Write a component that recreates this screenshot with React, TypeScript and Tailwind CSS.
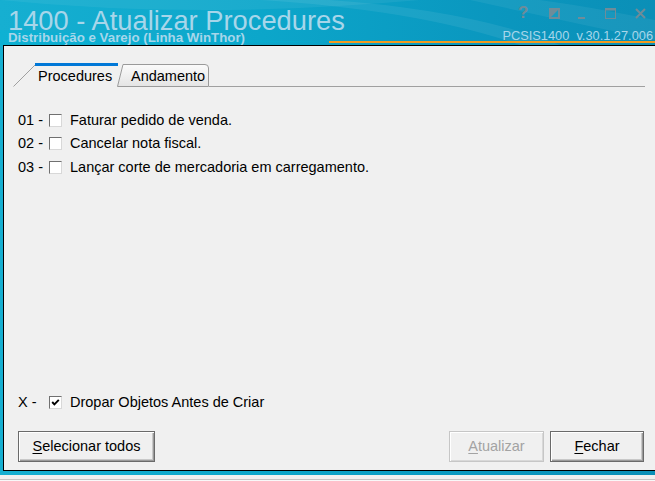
import React from "react";

function Checkbox({ checked = false }: { checked?: boolean }) {
  return (
    <div className="w-[13px] h-[13px] shrink-0 bg-white border-t border-l border-t-[#707070] border-l-[#707070] border-r border-b border-r-[#d8d8d8] border-b-[#d8d8d8] relative">
      {checked && (
        <svg width="11" height="11" viewBox="0 0 11 11" className="absolute left-0 top-0">
          <path d="M2.2 5 L4.4 7.4 L8.8 2.8" fill="none" stroke="#000" strokeWidth="1.9" />
        </svg>
      )}
    </div>
  );
}

function Row({
  num,
  label,
  className = "",
  checked = false,
}: {
  num: string;
  label: string;
  className?: string;
  checked?: boolean;
}) {
  return (
    <div className={"flex items-start " + className}>
      <div className="w-[31px] text-[14.5px] leading-[13px] text-black whitespace-nowrap">{num}</div>
      <Checkbox checked={checked} />
      <div className="ml-[8px] text-[14.5px] leading-[13px] text-black whitespace-nowrap">{label}</div>
    </div>
  );
}

function Button({
  children,
  className = "",
  disabled = false,
}: {
  children: React.ReactNode;
  className?: string;
  disabled?: boolean;
}) {
  return (
    <div
      className={
        "h-[31px] flex items-center justify-center text-[14.5px] leading-none bg-[#f0f0f0] border " +
        (disabled
          ? "border-[#c6c6c6] text-[#a3a3a3] shadow-[inset_1px_1px_0_#ffffff,inset_-1px_-1px_0_#d8d8d8] "
          : "border-[#6a6a6a] text-black shadow-[inset_1px_1px_0_#ffffff,inset_-1px_-1px_0_#9a9a9a,inset_-2px_-2px_0_#c8c8c8] ") +
        className
      }
    >
      {children}
    </div>
  );
}

export default function App() {
  return (
    <div
      className="w-[655px] h-[481px] overflow-hidden flex flex-col bg-[#f0f0f0]"
      style={{ fontFamily: '"Liberation Sans", Arial, sans-serif' }}
    >
      <div className="h-[475px] flex flex-col bg-[linear-gradient(90deg,#16afd1_0%,#0ca6ca_40%,#0a97bf_75%,#0b8fb7_100%)]">
        {/* Header */}
        <div className="h-[45px] relative flex overflow-hidden">
          <svg className="absolute inset-0" width="655" height="45" viewBox="0 0 655 45">
            <path d="M0 0 Q200 20 420 0 Z" fill="#ffffff" opacity="0.06" />
            <path d="M260 0 Q420 10 520 45 L560 45 Q470 10 330 0 Z" fill="#ffffff" opacity="0.07" />
            <path d="M470 0 Q560 20 655 40 L655 20 Q580 5 540 0 Z" fill="#ffffff" opacity="0.06" />
            <path d="M0 30 Q150 38 330 42 L0 45 Z" fill="#00b4d6" opacity="0.35" />
          </svg>
          <div className="relative pl-[8px] pt-[10px] flex flex-col">
            <div className="text-[27.3px] leading-[22px] text-[#a7d6ea] whitespace-nowrap">
              1400 - Atualizar Procedures
            </div>
            <div className="text-[13.3px] leading-[11px] font-bold text-[#a7d6ea] whitespace-nowrap">
              Distribuição e Varejo (Linha WinThor)
            </div>
          </div>
          <div className="relative ml-auto flex flex-col items-end">
            <div className="flex items-end h-[12px] mt-[7px] pr-[9px] text-[#6f8c99]">
              <div className="text-[17px] leading-[13px] font-bold w-[10px] text-center">?</div>
              <svg className="ml-[21px]" width="11" height="11" viewBox="0 0 11 11">
                <rect x="1" y="1" width="9" height="9" fill="none" stroke="#6f8c99" strokeWidth="2" />
                <path d="M0 0 L11 0 L0 11 Z" fill="#6f8c99" />
              </svg>
              <div className="ml-[18px] w-[7px] h-[2px] bg-[#6f8c99]" />
              <svg className="ml-[20px]" width="11" height="11" viewBox="0 0 11 11">
                <rect x="0.5" y="1" width="10" height="9.5" fill="none" stroke="#6f8c99" strokeWidth="1" />
                <rect x="0" y="0" width="11" height="2.5" fill="#6f8c99" />
              </svg>
              <svg className="ml-[19px]" width="11" height="11" viewBox="0 0 11 11">
                <path d="M1 1 L10 10 M10 1 L1 10" stroke="#6f8c99" strokeWidth="2" />
              </svg>
            </div>
            <div className="mt-[10px] pr-[2px] text-[12.8px] leading-[13px] text-[#a7d6ea] whitespace-pre">
              PCSIS1400  v.30.1.27.006
            </div>
          </div>
          <div className="absolute left-[329px] right-0 top-[41px] h-[2px] bg-[#f39a1e]" />
        </div>

        {/* Panel */}
        <div className="ml-[3px] h-[426px] bg-[#f0f0f0] border-t border-l border-b border-black flex flex-col">
          {/* Tabs */}
          <div className="mt-[17px] ml-[9px] mr-[10px] h-[24px] flex items-end">
            <div className="relative w-[105px] h-[24px] shrink-0">
              <svg className="absolute inset-0" width="105" height="24" viewBox="0 0 105 24">
                <path d="M0.5 23.5 L22 2" stroke="#a0a0a0" strokeWidth="1" fill="none" />
                <rect x="22" y="0" width="83" height="3" fill="#0078d7" />
              </svg>
              <div className="relative pl-[25px] pt-[5px] text-[14.5px] leading-[16px] text-black whitespace-nowrap">
                Procedures
              </div>
            </div>
            <div className="relative w-[92px] h-[23px] shrink-0 ml-[-1px]">
              <svg className="absolute inset-0" width="92" height="23" viewBox="0 0 92 23">
                <defs>
                  <linearGradient id="tabg" x1="0" y1="0" x2="0" y2="1">
                    <stop offset="0" stopColor="#fbfbfb" />
                    <stop offset="1" stopColor="#e4e4e4" />
                  </linearGradient>
                </defs>
                <path
                  d="M0.5 22.5 L6 0.5 L88 0.5 Q91.5 0.5 91.5 4 L91.5 22.5 Z"
                  fill="url(#tabg)"
                  stroke="#9a9a9a"
                  strokeWidth="1"
                />
              </svg>
              <div className="relative pl-[14px] pt-[4px] text-[14.5px] leading-[16px] text-black whitespace-nowrap">
                Andamento
              </div>
            </div>
            <div className="flex-1 h-[1px] bg-[#a0a0a0]" />
          </div>

          {/* Rows */}
          <div className="mt-[27px] ml-[14px] flex flex-col">
            <Row num="01 -" label="Faturar pedido de venda." />
            <Row num="02 -" label="Cancelar nota fiscal." className="mt-[10px]" />
            <Row num="03 -" label="Lançar corte de mercadoria em carregamento." className="mt-[11px]" />
          </div>

          <div className="flex-1" />

          <Row num="X -" label="Dropar Objetos Antes de Criar" className="ml-[14px]" checked />

          <div className="mt-[22px] mb-[8px] ml-[14px] mr-[11px] flex items-center">
            <Button className="w-[137px]">
              <span>
                <span className="underline underline-offset-2">S</span>elecionar todos
              </span>
            </Button>
            <Button className="w-[95px] ml-auto" disabled>
              <span>
                <span className="underline underline-offset-2">A</span>tualizar
              </span>
            </Button>
            <Button className="w-[94px] ml-[6px]">
              <span>
                <span className="underline underline-offset-2">F</span>echar
              </span>
            </Button>
          </div>
        </div>
        <div className="flex-1" />
      </div>
      <div className="h-[6px] flex flex-col bg-[#f0f0f0]">
        <div className="h-[4px]" />
        <div className="h-[1px] bg-[#c4c4c4]" />
        <div className="h-[1px] bg-[#f8f8f8]" />
      </div>
    </div>
  );
}
